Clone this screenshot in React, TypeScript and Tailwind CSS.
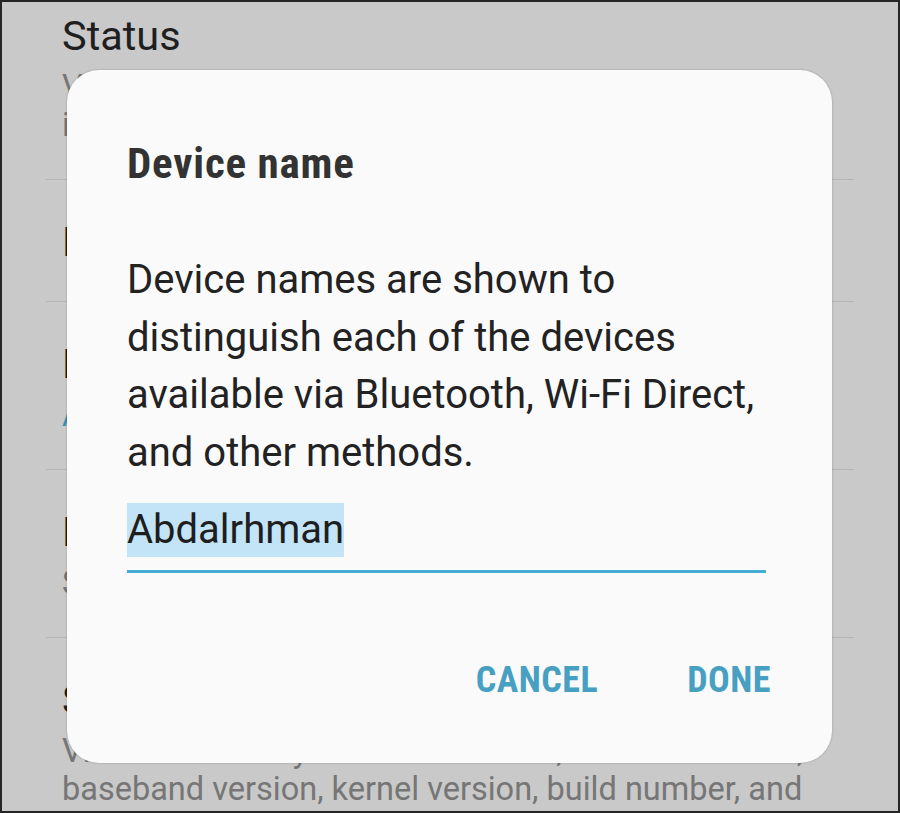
import React from "react";

type Item = { title: string; summary?: string[]; blue?: boolean };

const items: Item[] = [
  { title: "Status", summary: ["View the SIM card status, IMEI, and other", "information."] },
  { title: "Legal information" },
  { title: "Device name", summary: ["Abdalrhman"], blue: true },
  { title: "Model number", summary: ["SM-G935F"] },
  {
    title: "Software information",
    summary: ["View the security software version, Android version,", "baseband version, kernel version, build number, and"],
  },
];

function Row({ item, last }: { item: Item; last: boolean }) {
  return (
    <div>
      <div className={`pl-[60px] ${last ? "pt-[38px]" : ""}`}>
        <div className="text-[41.5px] leading-[48px] text-[#1f1f1f] whitespace-nowrap">{item.title}</div>
        {item.summary && (
          <div className={`mt-[8px] text-[32.5px] leading-[38px] whitespace-nowrap ${item.blue ? "text-[#3a8fb3]" : "text-[#767676]"}`}>
            {item.summary.map((s) => (
              <div key={s}>{s}</div>
            ))}
          </div>
        )}
      </div>
      {!last && <div className="mt-[35px] mx-[44px] h-px bg-[#b5b5b5]" />}
    </div>
  );
}

export default function App() {
  return (
    <div className="relative w-[900px] h-[813px] overflow-hidden border-2 border-[#262626] bg-[#c9c9c9] font-['Roboto','Liberation_Sans',sans-serif]">
      <div className="pt-[10px] flex flex-col">
        {items.map((it, i) => (
          <div key={it.title} className={i > 0 && i < items.length - 1 ? "pt-[38px]" : ""}>
            <Row item={it} last={i === items.length - 1} />
          </div>
        ))}
      </div>

      <div className="absolute left-[65px] top-[68px] w-[765px] h-[693px] rounded-[32px] bg-[#fafafa] shadow-[0_0_2px_rgba(0,0,0,0.3)]">
        <div className="pl-[60px] pt-[69px] text-[43px] leading-[48px] tracking-[0.8px] font-bold text-[#333333] font-['Roboto_Condensed','Roboto',sans-serif] whitespace-nowrap">
          Device name
        </div>
        <div className="pl-[60px] mt-[64px] text-[40px] leading-[57.5px] text-[#222222] whitespace-nowrap">
          <div>Device names are shown to</div>
          <div>distinguish each of the devices</div>
          <div>available via Bluetooth, Wi-Fi Direct,</div>
          <div>and other methods.</div>
        </div>
        <div className="pl-[60px] pr-[66px] mt-[22px]">
          <div className="flex">
            <span className="inline-block h-[54px] leading-[54px] text-[40px] text-[#1e1e1e] bg-[#c3e4f7]">Abdalrhman</span>
          </div>
          <div className="mt-[13px] h-[3px] bg-[#45acd5]" />
        </div>
        <div className="mt-[87px] pr-[61px] flex justify-end gap-[89px] text-[36px] leading-[40px] tracking-[0.5px] font-bold text-[#47a0c2] font-['Roboto_Condensed','Roboto',sans-serif]">
          <span>CANCEL</span>
          <span>DONE</span>
        </div>
      </div>
    </div>
  );
}
